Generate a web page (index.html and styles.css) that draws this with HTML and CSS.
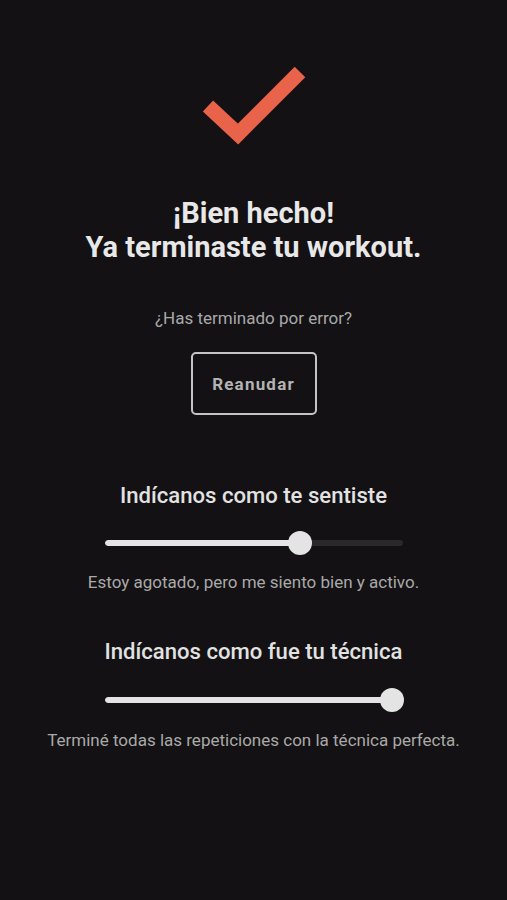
FILE: index.html
```html
<!DOCTYPE html>
<html lang="es">
<head>
<meta charset="utf-8">
<link rel="stylesheet" href="styles.css">
</head>
<body>
<main class="screen">
  <svg class="check" width="110" height="88" viewBox="0 0 110 88" aria-hidden="true">
    <polyline points="9,44 39,72 101,10" fill="none" stroke="#e8634a" stroke-width="15" stroke-linejoin="miter" stroke-linecap="butt"/>
  </svg>
  <h1 class="title">¡Bien hecho!<br>Ya terminaste tu workout.</h1>
  <p class="question">¿Has terminado por error?</p>
  <button class="resume">Reanudar</button>

  <section class="rating rating-feel">
    <h2 class="rating-title">Indícanos como te sentiste</h2>
    <div class="slider">
      <div class="track"><div class="fill" style="width:65.4%"></div></div>
      <div class="thumb" style="left:65.4%"></div>
    </div>
    <p class="caption">Estoy agotado, pero me siento bien y activo.</p>
  </section>

  <section class="rating rating-tech">
    <h2 class="rating-title">Indícanos como fue tu técnica</h2>
    <div class="slider">
      <div class="track"><div class="fill" style="width:100%"></div></div>
      <div class="thumb" style="left:96.3%"></div>
    </div>
    <p class="caption">Terminé todas las repeticiones con la técnica perfecta.</p>
  </section>
</main>
</body>
</html>
```

FILE: styles.css
```css
html, body {
  margin: 0;
  padding: 0;
  background: #131113;
  height: 100%;
}
body {
  font-family: Roboto, "Liberation Sans", sans-serif;
  color: #e6e6e6;
}
.screen {
  display: flex;
  flex-direction: column;
  align-items: center;
  padding-top: 62px;
  min-height: 900px;
  box-sizing: border-box;
}
.check {
  display: block;
}
.title {
  margin: 46px 0 0;
  font-size: 29px;
  line-height: 34px;
  font-weight: 700;
  text-align: center;
  color: #e8e8e8;
}
.question {
  margin: 44px 0 0;
  font-size: 17px;
  line-height: 20px;
  color: #a9a9a9;
  white-space: nowrap;
}
.resume {
  margin-top: 24px;
  width: 126px;
  height: 63px;
  background: transparent;
  border: 2px solid #c4c4c4;
  border-radius: 5px;
  color: #b3b3b3;
  font-family: Roboto, "Liberation Sans", sans-serif;
  font-weight: 700;
  font-size: 17px;
  letter-spacing: 1.2px;
}
.rating {
  display: flex;
  flex-direction: column;
  align-items: center;
}
.rating-feel { margin-top: 67px; }
.rating-tech { margin-top: 46px; }
.rating-title {
  margin: 0;
  font-size: 22.1px;
  line-height: 26px;
  font-weight: 500;
  color: #e2e2e2;
  white-space: nowrap;
}
.slider {
  position: relative;
  width: 298px;
  height: 24px;
  margin-top: 23px;
  margin-left: 1px;
}
.track {
  position: absolute;
  left: 0;
  right: 0;
  top: 9px;
  height: 6px;
  border-radius: 3px;
  background: #2a2829;
  overflow: hidden;
}
.fill {
  height: 100%;
  background: #e4e4e4;
  border-radius: 3px;
}
.thumb {
  position: absolute;
  top: 0;
  width: 24px;
  height: 24px;
  margin-left: -12px;
  border-radius: 50%;
  background: #e4e4e4;
}
.caption {
  margin: 17px 0 0;
  font-size: 17px;
  line-height: 20px;
  color: #a9a9a9;
  white-space: nowrap;
}
.rating-tech .slider { margin-top: 24px; }
.rating-tech .caption { margin-top: 18px; }
```
